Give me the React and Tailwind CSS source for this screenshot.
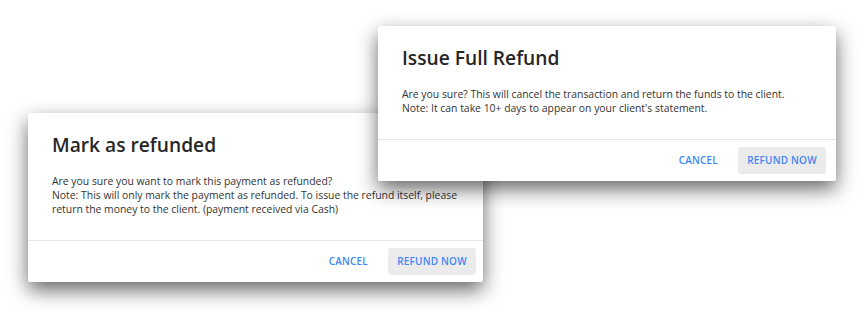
import React from "react"

const FONT = { fontFamily: "'Open Sans', 'Noto Sans', sans-serif" }

function Dialog({ title, lines, className, footerClass }) {
	return (
		<div className={`absolute bg-white rounded-[2px] shadow-[0_8px_20px_rgba(0,0,0,0.6)] flex flex-col ${className}`}>
			<div className="px-6 pt-[18px] pb-[24px]">
				<h2 className="text-[19.2px] leading-[28px] font-semibold text-[#262626]">{title}</h2>
				<div className="mt-[15px] text-[10.4px] leading-[14px] text-[#333]">
					{lines.map((l, i) => (
						<p key={i}>{l}</p>
					))}
				</div>
			</div>
			<div className={`border-t border-[#e6e6e6] flex justify-end items-center gap-[8px] pt-[7px] pb-[7px] ${footerClass}`}>
				<button type="button" className="px-3 h-[27px] whitespace-nowrap text-[10px] font-semibold tracking-[0.2px] text-[#4285f4]">
					CANCEL
				</button>
				<button type="button" className="h-[27px] w-[88px] whitespace-nowrap rounded-[3px] bg-[#ebebeb] text-[10px] font-semibold tracking-[0.2px] text-[#4285f4]">
					REFUND NOW
				</button>
			</div>
		</div>
	)
}

export default function App() {
	return (
		<div className="relative w-[864px] h-[312px] bg-white overflow-hidden" style={FONT}>
			<Dialog
				className="left-[28px] top-[113px] w-[455px] z-0"
				footerClass="pr-[7px]"
				title="Mark as refunded"
				lines={[
					"Are you sure you want to mark this payment as refunded?",
					"Note: This will only mark the payment as refunded. To issue the refund itself, please",
					"return the money to the client. (payment received via Cash)",
				]}
			/>
			<Dialog
				className="left-[378px] top-[26px] w-[458px] z-10"
				footerClass="pr-[10px]"
				title="Issue Full Refund"
				lines={[
					"Are you sure? This will cancel the transaction and return the funds to the client.",
					"Note: It can take 10+ days to appear on your client's statement.",
				]}
			/>
		</div>
	)
}
